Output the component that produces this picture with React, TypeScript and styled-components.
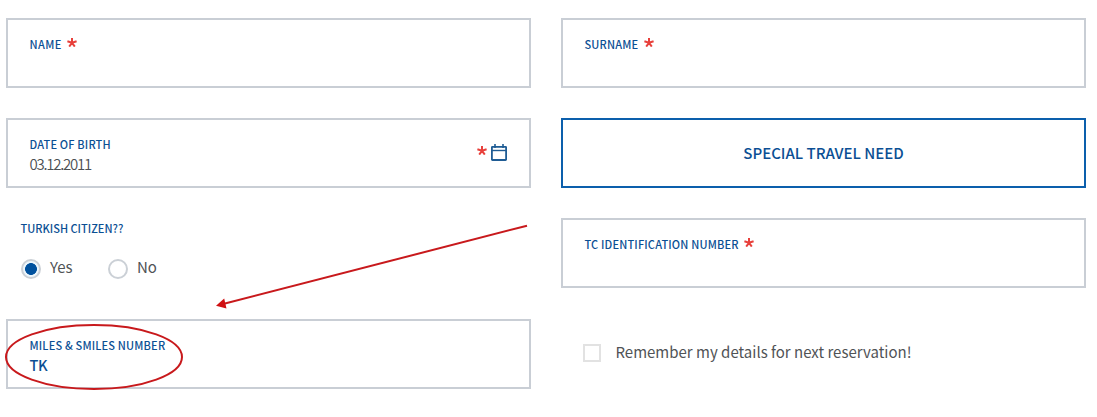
import React from 'react';
import styled, { createGlobalStyle } from 'styled-components';

const GlobalStyle = createGlobalStyle`
  body { margin: 0; background: #fff; font-family: 'Noto Sans CJK SC', 'Open Sans', sans-serif; }
  * { box-sizing: border-box; }
`;

const Form = styled.main`
  position: relative;
  display: grid;
  grid-template-columns: 525px 525px;
  column-gap: 30px;
  width: 1097px;
  height: 417px;
  padding: 18px 0 0 6px;
  overflow: hidden;
`;

const Column = styled.div`
  display: flex;
  flex-direction: column;
`;

const Field = styled.div`
  display: flex;
  justify-content: space-between;
  height: 70px;
  margin-bottom: 30px;
  flex-shrink: 0;
  padding: 14px 22px 0 21.5px;
  border: 2px solid #c9ced5;
`;

const Label = styled.div<{ $spacing?: number }>`
  display: flex;
  height: 20px;
  font-size: 11px;
  line-height: 20px;
  font-weight: 500;
  white-space: nowrap;
  color: #0b4f94;
  letter-spacing: ${p => p.$spacing ?? 0.17}px;
`;

const Value = styled.div<{ $strong?: boolean }>`
  font-size: ${p => (p.$strong ? 14.5 : 15)}px;
  line-height: 20px;
  font-weight: ${p => (p.$strong ? 500 : 350)};
  color: ${p => (p.$strong ? '#0b4f94' : '#4c5054')};
  letter-spacing: ${p => (p.$strong ? -0.3 : -1.25)}px;
`;

const Star = styled.svg`
  display: block;
  width: 10px;
  height: 9px;
  margin: 4px 0 0 5.5px;
  flex-shrink: 0;
`;

const DateTools = styled.div`
  display: flex;
  gap: 4px;
  padding-top: 10px;
  height: 30px;

  ${Star} { margin-top: 2px; }
`;

const NeedButton = styled.button`
  height: 70px;
  margin: 0 0 30px;
  padding: 0;
  flex-shrink: 0;
  border: 2px solid #0c5fac;
  background: #fff;
  color: #0b4f94;
  font: 500 15px/22px 'Noto Sans CJK SC', 'Open Sans', sans-serif;
  letter-spacing: 0;
`;

const Citizen = styled.div`
  height: 101px;
  padding-left: 14.5px;
`;

const Choices = styled.div`
  display: flex;
  padding: 18px 0 0 0.5px;
`;

const Choice = styled.label<{ $width: number }>`
  display: flex;
  align-items: center;
  gap: 9px;
  width: ${p => p.$width}px;
  height: 24px;
  font-size: 15px;
  line-height: 24px;
  color: #505356;
`;

const ChoiceText = styled.span`
  height: 24px;
  line-height: 22px;
`;

const Radio = styled.span<{ $on?: boolean }>`
  width: 20px;
  height: 20px;
  margin-top: 2px;
  border: 2px solid #cbd0d6;
  border-radius: 50%;
  background: ${p => (p.$on ? 'radial-gradient(circle, #00519e 5.6px, #edf6fc 6.2px)' : '#fff')};
`;

const Remember = styled.label`
  display: flex;
  align-items: center;
  gap: 14.5px;
  height: 24px;
  margin: 22px 0 0 22px;
  font-size: 15px;
  line-height: 24px;
  color: #505356;
  white-space: nowrap;
`;

const Box = styled.span`
  width: 18px;
  height: 18px;
  margin-top: 1px;
  border: 2px solid #e2e2e2;
`;

const Annotation = styled.svg`
  position: absolute;
  left: 0;
  top: 0;
  pointer-events: none;
`;

function Required() {
  return (
    <Star viewBox="0 0 10 9" fill="none" stroke="#e8403b" strokeWidth="2">
      <path d="M5 4.8V0M5 4.8L.4 3.3M5 4.8l4.6-1.5M5 4.8L2.2 8.6M5 4.8l2.8 3.8" />
    </Star>
  );
}

function Calendar() {
  return (
    <svg width="16" height="17" viewBox="0 0 16 17" fill="none" stroke="#1f5c94">
      <rect x=".9" y="2.8" width="14.2" height="13.2" rx=".5" strokeWidth="1.8" />
      <path d="M1 6.5h14" strokeWidth="1.4" />
      <path d="M4 0v4M12 0v4" strokeWidth="1.6" />
    </svg>
  );
}

export default function App() {
  return (
    <>
      <GlobalStyle />
      <Form>
        <Column>
          <Field><Label $spacing={0.4}>NAME<Required /></Label></Field>
          <Field>
            <div>
              <Label>DATE OF BIRTH</Label>
              <Value>03.12.2011</Value>
            </div>
            <DateTools><Required /><Calendar /></DateTools>
          </Field>
          <Citizen>
            <Label $spacing={0}>TURKISH CITIZEN??</Label>
            <Choices>
              <Choice $width={87}><Radio $on /><ChoiceText>Yes</ChoiceText></Choice>
              <Choice $width={60}><Radio /><ChoiceText>No</ChoiceText></Choice>
            </Choices>
          </Citizen>
          <Field>
            <div>
              <Label>MILES &amp; SMILES NUMBER</Label>
              <Value $strong>TK</Value>
            </div>
          </Field>
        </Column>
        <Column>
          <Field><Label>SURNAME<Required /></Label></Field>
          <NeedButton>SPECIAL TRAVEL NEED</NeedButton>
          <Field><Label>TC IDENTIFICATION NUMBER<Required /></Label></Field>
          <Remember><Box />Remember my details for next reservation!</Remember>
        </Column>
        <Annotation width="1097" height="417">
          <ellipse cx="94" cy="357" rx="88" ry="32" fill="none" stroke="#c8191c" strokeWidth="2" />
          <path d="M527 225.7L224 303.7" stroke="#c8191c" strokeWidth="2" />
          <path d="M216 305.8l8.2-7.3 2.3 10z" fill="#d01012" />
        </Annotation>
      </Form>
    </>
  );
}
